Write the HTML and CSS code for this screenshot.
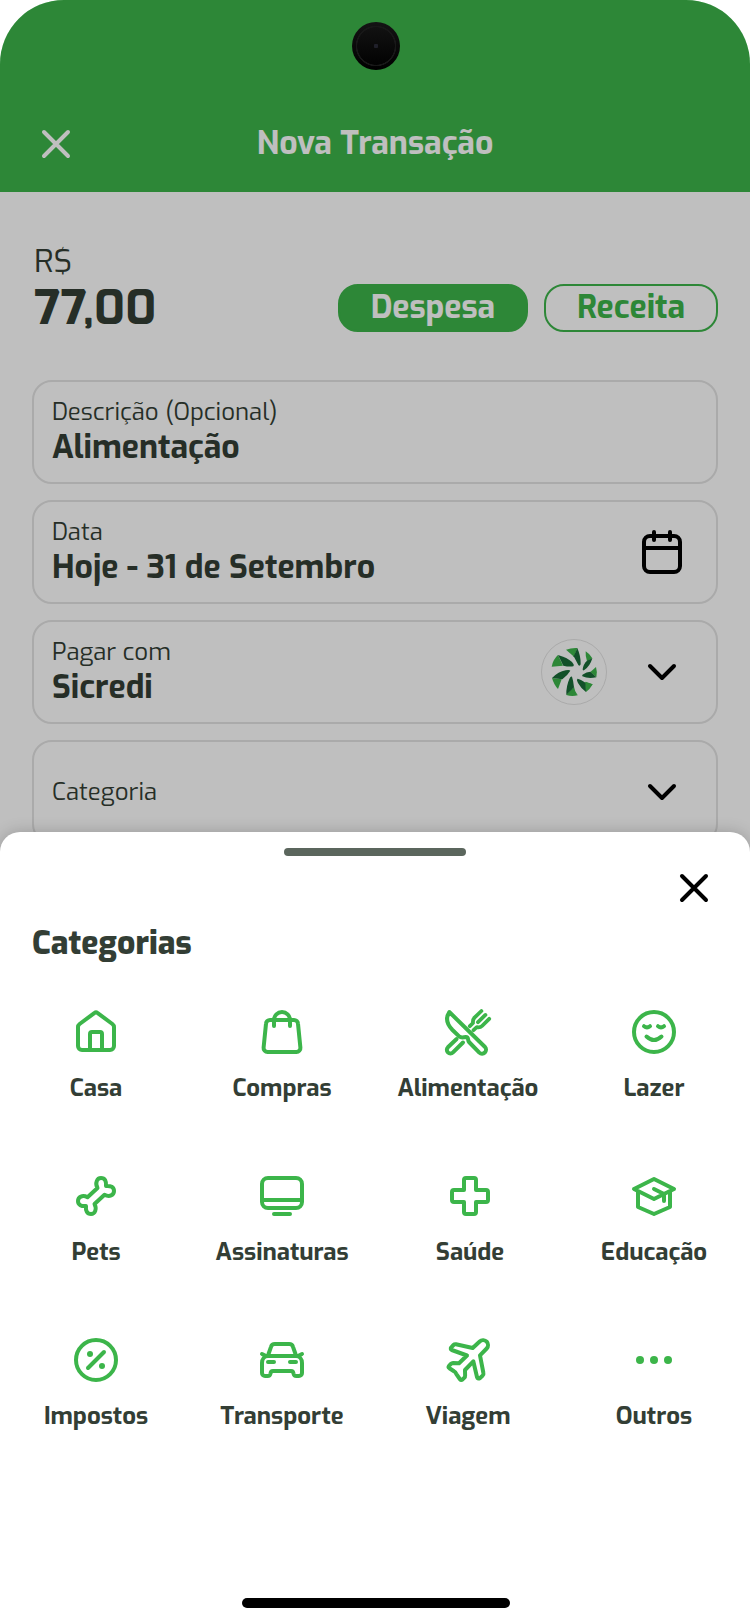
FILE: index.html
```html
<!DOCTYPE html>
<html lang="pt-BR">
<head>
<meta charset="utf-8">
<title>Nova Transação</title>
<link rel="stylesheet" href="styles.css">
</head>
<body>
<div class="phone">
  <header class="header">
    <svg class="icon" viewBox="0 0 48 48"><path d="M12 12L36 36M36 12L12 36"/></svg>
    <h1 class="title">Nova Transação</h1>
  </header>
  <main class="form">
    <div class="summary">
      <div class="amount"><span class="currency">R$</span><span class="value">77,00</span></div>
      <div class="pills">
        <span class="pill pill-on">Despesa</span>
        <span class="pill pill-off">Receita</span>
      </div>
    </div>
    <div class="field">
      <div class="texts"><span class="label">Descrição (Opcional)</span><span class="entry">Alimentação</span></div>
    </div>
    <div class="field">
      <div class="texts"><span class="label">Data</span><span class="entry">Hoje - 31 de Setembro</span></div>
      <svg class="icon" viewBox="0 0 48 48"><rect x="6" y="8" width="36" height="36" rx="6"/><path d="M6 20H42M16 4v8M32 4v8"/></svg>
    </div>
    <div class="field">
      <div class="texts"><span class="label">Pagar com</span><span class="entry">Sicredi</span></div>
      <svg class="bank" viewBox="123 417 198 198">
        <circle class="ring" cx="222" cy="516" r="97.5"/>
        <g class="leaf">
          <path d="M198 449Q214 443 232 444L222 470Z"/>
          <path d="M257 454Q270 462 277 475L261 484Q256 470 257 454Z"/>
          <path d="M288 501Q293 518 289 532L271 516Z"/>
          <path d="M278 553Q270 568 258 576L254 546Z"/>
          <path d="M233 586Q215 590 199 585L215 567Z"/>
          <path d="M174 567Q162 555 156 534L185 538Z"/>
          <path d="M174 465Q159 478 155 500L189 497Z"/>
          <path d="M222 560Q224 574 233 586L212 572Z"/>
          <path d="M278 553L257 545L256 573Z"/>
        </g>
        <g class="leaf-dark">
          <path d="M232 444Q243 470 242 493Q239 500 235 495L221 469Z"/>
          <path d="M277 475Q270 499 253 510Q248 513 248 508Q250 492 261 482Z"/>
          <path d="M271 515L289 532Q264 537 247 529Q245 525 250 523Q259 516 271 515Z"/>
          <path d="M256 548Q242 537 232 536Q229 540 234 549Q242 564 258 576Z"/>
          <path d="M199 585L222 562Q220 541 216 530Q212 528 209 535Q198 559 199 585Z"/>
          <path d="M156 534L187 538Q204 524 211 512Q208 508 197 511Q175 515 156 534Z"/>
          <path d="M174 465L190 497Q207 501 220 499Q224 495 216 486Q202 473 174 465Z"/>
        </g>
      </svg>
      <svg class="icon" viewBox="0 0 48 48"><path d="M12 18L24 30L36 18"/></svg>
    </div>
    <div class="field">
      <div class="texts texts-single"><span class="label">Categoria</span></div>
      <svg class="icon" viewBox="0 0 48 48"><path d="M12 18L24 30L36 18"/></svg>
    </div>
  </main>
  <div class="scrim"></div>
  <div class="camera"></div>
  <section class="sheet">
    <div class="handle"></div>
    <div class="sheet-bar"><svg class="icon" viewBox="0 0 48 48"><path d="M12 12L36 36M36 12L12 36"/></svg></div>
    <h2 class="heading">Categorias</h2>
    <div class="grid">
      <div class="item"><svg class="icon" viewBox="0 0 48 48"><path d="M22.6 4.9Q24 3.8 25.4 4.9L40.4 16Q42 17.3 42 19V38a4 4 0 0 1-4 4H10a4 4 0 0 1-4-4V19Q6 17.3 7.6 16Z"/><path d="M18 42V26a2 2 0 0 1 2-2h8a2 2 0 0 1 2 2V42"/></svg><span>Casa</span></div>
      <div class="item"><svg class="icon" viewBox="0 0 48 48"><path d="M12 12H36a4 4 0 0 1 4 3.7L42.4 39.6a4 4 0 0 1-4 4.4H9.6a4 4 0 0 1-4-4.4L8 15.7A4 4 0 0 1 12 12Z"/><path d="M16 18v-6a8 8 0 0 1 16 0v6"/></svg><span>Compras</span></div>
      <div class="item"><svg class="icon" viewBox="0 0 48 48"><path d="M5.3 4L41 39a4 4 0 0 1-5.7 5.6L25 34C23.3 32 25 29 22 29C19 29.6 17 30 15.4 28.6L8.5 22C3 16.5 1.5 10 5.3 4Z"/><path d="M12.6 31L3.9 39.3A3.6 3.6 0 0 0 9 44.4L19 34.5"/><path class="tine" d="M37.4 3L30.5 9.6Q28.6 11.6 29 15L25.8 18.2M45.2 10.8L38 18Q36.2 19.8 32.8 19.2L29.5 22.2M41.4 6.9L34 14.2"/></svg><span>Alimentação</span></div>
      <div class="item"><svg class="icon" viewBox="0 0 48 48"><circle cx="24" cy="24" r="20"/><path d="M14 18.2q3 2.4 6 0M28 18.2q3 2.4 6 0M16.5 28.5q7.5 7 15 0"/></svg><span>Lazer</span></div>
      <div class="item"><svg class="icon" viewBox="0 0 48 48"><path d="M25.5 16C22.8 11 25 6 29 6C33 6 34.5 9.5 34 14C38.5 13.5 42 15 42 19C42 23 37.5 25.5 32.5 22.7L22.5 32C25.2 37 23 42 19 42C15 42 13.5 38.5 14 34C9.5 34.5 6 33 6 29C6 25 10.5 22.5 15.5 25.3Z"/></svg><span>Pets</span></div>
      <div class="item"><svg class="icon" viewBox="0 0 48 48"><rect x="4" y="6" width="40" height="30" rx="6"/><path d="M4 28H44M16 42H32"/></svg><span>Assinaturas</span></div>
      <div class="item item-shift"><svg class="icon" viewBox="0 0 48 48"><path d="M20 6h8a2 2 0 0 1 2 2v10h10a2 2 0 0 1 2 2v8a2 2 0 0 1-2 2H30v10a2 2 0 0 1-2 2h-8a2 2 0 0 1-2-2V30H8a2 2 0 0 1-2-2v-8a2 2 0 0 1 2-2h10V8a2 2 0 0 1 2-2z"/></svg><span>Saúde</span></div>
      <div class="item"><svg class="icon" viewBox="0 0 48 48"><path d="M24 7L44 17L24 27L4 17ZM8 19V35L24 42L40 35V19M24 17L34 22V29"/></svg><span>Educação</span></div>
      <div class="item"><svg class="icon" viewBox="0 0 48 48"><circle cx="24" cy="24" r="20"/><path d="M16 32L32 16"/><circle class="dot" cx="18" cy="18" r="3"/><circle class="dot" cx="30" cy="30" r="3"/></svg><span>Impostos</span></div>
      <div class="item"><svg class="icon" viewBox="0 0 48 48"><path d="M10.5 18L13 10.8A4 4 0 0 1 16.8 8H31.2A4 4 0 0 1 35 10.8L37.5 18M4 18L8 20H40L44 18"/><path d="M10 20C6.5 20 4 23 4 27V37a3 3 0 0 0 3 3h2.5a3 3 0 0 0 3-2.5Q12.8 35 15 35H33Q35.2 35 35.5 37.5a3 3 0 0 0 3 2.5H41a3 3 0 0 0 3-3V27C44 23 41.5 20 38 20M10 26h6M32 26h6"/></svg><span>Transporte</span></div>
      <div class="item"><svg class="icon" viewBox="0 0 48 48"><path d="M28.7 12L12 8.3Q10.5 8 9.5 9L7.3 11.3Q6 13 7.8 14L23 19.5L15 27.3L9 27Q7.8 27 6.8 28L5 29.8Q4 31.2 5.4 32.2L10 35.2Q11.5 36 12.2 37.8L15.8 43Q17 44.7 18.6 43.4L20.4 41.6Q21.2 41 21.1 39.5L21 34L29.3 25.3L33 41Q33.8 43.3 35.8 42.2L38.5 39.8Q39.8 38.6 39.4 37L36 19.3L42.7 12.5C44.6 10.5 44.3 7.5 42.7 5.7C41 4 37.8 3.5 35.7 5.4Z"/></svg><span>Viagem</span></div>
      <div class="item"><svg class="icon" viewBox="0 0 48 48"><circle class="dot" cx="10" cy="24" r="4"/><circle class="dot" cx="24" cy="24" r="4"/><circle class="dot" cx="38" cy="24" r="4"/></svg><span>Outros</span></div>
    </div>
    <div class="home-bar"></div>
  </section>
</div>
</body>
</html>
```
FILE: styles.css
```css
* { box-sizing: border-box; }
body { margin: 0; background: #fff; font-family: Exo, "Exo 2", Roboto, sans-serif; color: #333e35; }
h1, h2 { margin: 0; }
span { white-space: nowrap; }
.phone { position: relative; width: 750px; height: 1624px; overflow: hidden; background: #fff; border-radius: 64px 64px 0 0; }
.icon { width: 48px; height: 48px; flex: none; fill: none; stroke: #000; stroke-width: 4; stroke-linecap: round; stroke-linejoin: round; }

.header { height: 192px; padding: 120px 32px 0; display: grid; grid-template-columns: 48px 1fr 48px; align-items: start; background: #3cb54a; }
.header .icon { stroke: #fff; }
.title { line-height: 46px; text-align: center; font-size: 32px; font-weight: 700; color: #fff; }

.form { padding: 48px 32px 0; display: flex; flex-direction: column; gap: 16px; }
.summary { display: flex; justify-content: space-between; align-items: flex-start; height: 124px; }
.amount { display: flex; flex-direction: column; padding-left: 2px; }
.currency { line-height: 42px; font-size: 32px; font-weight: 400; }
.value { line-height: 52px; font-size: 48px; font-weight: 700; }
.pills { display: flex; gap: 16px; margin-top: 44px; }
.pill { height: 48px; border: 2px solid #3cb54a; border-radius: 20px; text-align: center; line-height: 43px; font-size: 32px; font-weight: 700; }
.pill-on { width: 190px; background: #3cb54a; color: #fff; }
.pill-off { width: 174px; color: #3cb54a; }

.field { height: 104px; border: 2px solid #e3e3e3; border-radius: 20px; padding: 0 30px 0 18px; display: flex; align-items: center; }
.texts { flex: 1; display: flex; flex-direction: column; padding-bottom: 2px; }
.texts-single { padding: 0; }
.label { line-height: 32px; font-size: 24px; font-weight: 400; }
.entry { line-height: 38px; font-size: 32px; font-weight: 700; }
.bank { width: 66px; height: 66px; margin-right: 31px; }
.ring { fill: none; stroke: #e3e3e3; stroke-width: 3; }
.leaf { fill: #3cb54a; }
.leaf-dark { fill: #186b37; }

.scrim { position: absolute; inset: 0; background: rgba(0, 0, 0, .25); }
.camera { position: absolute; left: 352px; top: 22px; width: 48px; height: 48px; border-radius: 50%; background: radial-gradient(circle, #20202a 0 2px, transparent 2.5px 18.5px, #181818 19px 20px, transparent 20.5px), linear-gradient(#141414, #000); }

.sheet { position: absolute; left: 0; right: 0; top: 832px; height: 792px; background: #fff; border-radius: 20px 20px 0 0; box-shadow: 0 0 16px rgba(0, 0, 0, .2); padding-top: 15.5px; display: flex; flex-direction: column; }
.handle { align-self: center; width: 182px; height: 8px; margin-bottom: .5px; border-radius: 4px; background: #5b665d; }
.sheet-bar { height: 64px; padding: 8px 32px; display: flex; justify-content: flex-end; }
.heading { padding: 2px 0 0 32px; line-height: 43px; font-size: 32px; font-weight: 800; }
.grid { padding: 43px 3px 0; display: grid; grid-template-columns: repeat(4, 186px); grid-auto-rows: 164px; }
.item { display: flex; flex-direction: column; align-items: center; gap: 16px; font-size: 24px; font-weight: 700; line-height: 33px; }
.item-shift { padding-left: 4px; }
.item .icon { stroke: #3cb54a; }
.item .tine { stroke-width: 3.8; }
.item .dot { fill: #3cb54a; stroke: none; }
.home-bar { margin: auto 240px 16px 242px; width: 268px; height: 10px; border-radius: 5px; background: #000; }
```
